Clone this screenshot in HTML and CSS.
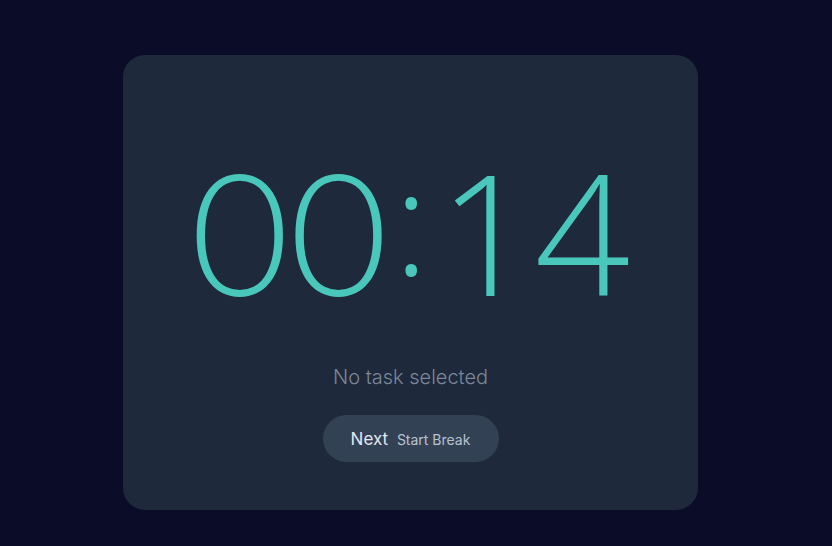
FILE: index.html
```html
<html>
<head>
<meta charset="utf-8">
<link rel="stylesheet" href="styles.css">
</head>
<body>
    <div class="wrapper">
        <div class="card">
            <div class="timer"><span class="mins">00</span><span class="colon">:</span><span class="secs">14</span></div>
            <p class="task">No task selected</p>
            <button class="next">Next <span class="sub">Start Break</span></button>
        </div>
    </div>
</body>
</html>
```

FILE: styles.css
```css
body, html {
    margin: 0;
    padding: 0;
    width: 100%;
    height: 100%;
    background-color: #0a0c28;
    font-family: 'Inter', sans-serif;
}

.wrapper {
    display: flex;
    padding-top: 55px;
    padding-left: 123px;
}

.card {
    width: 575px;
    height: 455px;
    box-sizing: border-box;
    background-color: #1e293b;
    border-radius: 22px;
    display: flex;
    flex-direction: column;
    align-items: center;
    padding-top: 90px;
}

.timer {
    font-size: 170px;
    line-height: 1;
    color: #4ac7bb;
    white-space: nowrap;
}

.mins {
    font-family: 'Lato', sans-serif;
    font-weight: 300;
    font-size: 170px;
}

.colon {
    display: inline-block;
    font-family: 'Open Sans', sans-serif;
    font-weight: 300;
    font-size: 146px;
    vertical-align: 20px;
    margin: 0 10px 0 6px;
}

.secs {
    font-family: 'Open Sans', sans-serif;
    font-weight: 300;
    font-size: 168px;
}

.task {
    margin: 50px 0 0 0;
    font-size: 20px;
    font-weight: 300;
    color: #7b8798;
}

.next {
    margin-top: 26px;
    width: 176px;
    height: 47px;
    border: none;
    border-radius: 24px;
    background-color: #334155;
    color: #e2e8f0;
    font-family: 'Inter', sans-serif;
    font-size: 17px;
}

.sub {
    font-size: 14px;
    color: #b8c2cf;
    margin-left: 4px;
}
```
